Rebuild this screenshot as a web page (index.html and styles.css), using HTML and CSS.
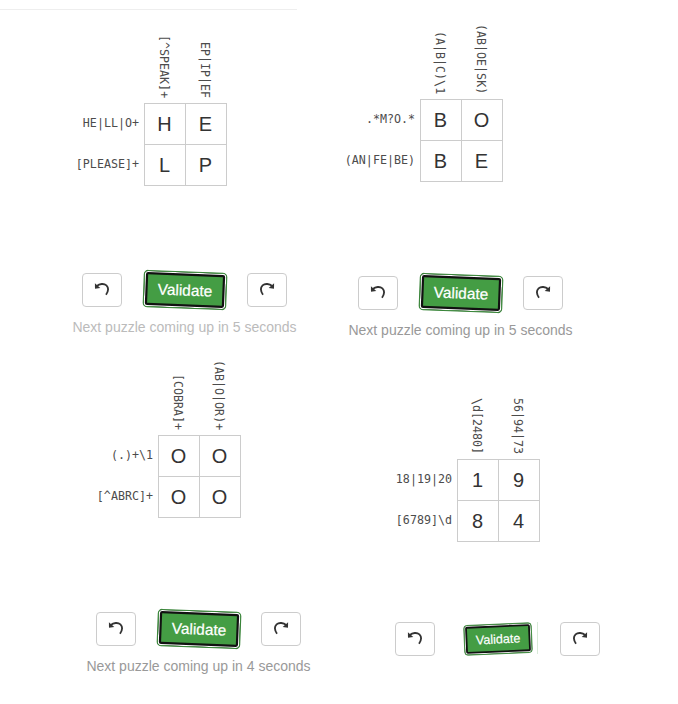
FILE: index.html
```html
<!DOCTYPE html>
<html lang="en">
<head>
<meta charset="utf-8">
<title>Regex Crossword</title>
<link rel="stylesheet" href="styles.css">
</head>
<body>
<svg width="0" height="0" class="defs"><defs>
<symbol id="undo" viewBox="0 0 16 16"><path d="M2.8 4C5.5 1.7 10 1.2 12.4 3.4C14.8 5.9 14.2 9.6 12 12.7" fill="none" stroke="currentColor" stroke-width="1.8"/><path d="M.9 1.3L1 6.8L6.3 6Z" fill="currentColor"/></symbol>
</defs></svg>
<hr class="rule">
<main class="page">
  <section class="puzzle puzzle-help">
    <div class="board">
      <div class="col-clues"><span>[^SPEAK]+</span><span>EP|IP|EF</span></div>
      <div class="row-clues"><span>HE|LL|O+</span><span>[PLEASE]+</span></div>
      <div class="cells"><div><b>H</b></div><div><b>E</b></div><div><b>L</b></div><div><b>P</b></div></div>
    </div>
    <div class="controls"><button class="icon-btn"><svg><use href="#undo"/></svg></button><button class="validate">Validate</button><button class="icon-btn redo"><svg><use href="#undo"/></svg></button></div>
    <p class="message faded">Next puzzle coming up in 5 seconds</p>
  </section>
  <section class="puzzle puzzle-bobe">
    <div class="board">
      <div class="col-clues"><span>(A|B|C)\1</span><span>(AB|OE|SK)</span></div>
      <div class="row-clues"><span>.*M?O.*</span><span>(AN|FE|BE)</span></div>
      <div class="cells"><div><b>B</b></div><div><b>O</b></div><div><b>B</b></div><div><b>E</b></div></div>
    </div>
    <div class="controls"><button class="icon-btn"><svg><use href="#undo"/></svg></button><button class="validate">Validate</button><button class="icon-btn redo"><svg><use href="#undo"/></svg></button></div>
    <p class="message">Next puzzle coming up in 5 seconds</p>
  </section>
  <section class="puzzle puzzle-oooo">
    <div class="board">
      <div class="col-clues"><span>[COBRA]+</span><span>(AB|O|OR)+</span></div>
      <div class="row-clues"><span>(.)+\1</span><span>[^ABRC]+</span></div>
      <div class="cells"><div><b>O</b></div><div><b>O</b></div><div><b>O</b></div><div><b>O</b></div></div>
    </div>
    <div class="controls"><button class="icon-btn"><svg><use href="#undo"/></svg></button><button class="validate">Validate</button><button class="icon-btn redo"><svg><use href="#undo"/></svg></button></div>
    <p class="message">Next puzzle coming up in 4 seconds</p>
  </section>
  <section class="puzzle puzzle-1984">
    <div class="board">
      <div class="col-clues"><span>\d[2480]</span><span>56|94|73</span></div>
      <div class="row-clues"><span>18|19|20</span><span>[6789]\d</span></div>
      <div class="cells"><div><b>1</b></div><div><b>9</b></div><div><b>8</b></div><div><b>4</b></div></div>
    </div>
    <div class="controls"><button class="icon-btn"><svg><use href="#undo"/></svg></button><div class="edge"><button class="validate small">Validate</button></div><button class="icon-btn redo"><svg><use href="#undo"/></svg></button></div>
  </section>
</main>
</body>
</html>
```
FILE: styles.css
```css
* { box-sizing: border-box; }
body { margin: 0; background: #fff; color: #333; font-family: "Liberation Sans", Arial, sans-serif; font-size: 14px; overflow: hidden; }
.defs { display: block; }
.rule { width: 297px; height: 1px; margin: 9px 0 -10px; border: 0; background: #eee; }
.page { display: grid; grid-template-columns: 339px 339px; grid-template-rows: 350px 354px; }
.puzzle { width: 241px; }
.puzzle-help { margin-left: 64px; padding-top: 23px; --gap: 87px; }
.puzzle-bobe { margin-left: 1px; padding-top: 19px; --gap: 94px; }
.puzzle-oooo { margin-left: 78px; padding-top: 5px; --gap: 94px; }
.puzzle-1984 { margin-left: 38px; padding-top: 29px; --gap: 80px; }
.board { display: grid; grid-template-columns: 80px 83px; grid-template-rows: 80px 83px; }
.col-clues, .row-clues { font: 11.67px/41px "DejaVu Sans Mono", monospace; color: #4c4c4c; white-space: nowrap; }
.col-clues { grid-column: 2; display: flex; padding-bottom: 5px; }
.col-clues span { width: 41px; writing-mode: vertical-rl; text-align: right; line-height: 41px; transform: translateX(-.5px) scaleX(1.07); }
.row-clues { display: flex; flex-direction: column; text-align: right; padding-right: 5px; }
.cells { display: grid; grid-template-columns: 40px 40px; grid-template-rows: 40px 40px; gap: 1px; padding: 1px; background: #ccc; }
.cells div { background: #fff; text-align: center; }
.cells b { display: block; font-size: 21px; font-weight: 400; line-height: 40px; transform: translateX(-.5px) scaleX(.95); }
.controls { display: flex; justify-content: space-between; width: 205px; margin: var(--gap) 0 0 18px; }
.icon-btn { width: 40px; height: 34px; padding: 0; border: 1px solid #ccc; border-radius: 4px; background: #fff; color: #333; display: flex; align-items: center; justify-content: center; }
.icon-btn svg { width: 16px; height: 16px; }
.redo svg { transform: scaleX(-1); }
.validate { width: 76px; height: 34px; padding: 0; border: 1px solid #398439; border-radius: 4px; background: #449d44; color: #fff; font: 14px "Liberation Sans", Arial, sans-serif; -webkit-text-stroke: .2px #fff; box-shadow: inset 0 0 0 1px #fff, inset 0 0 0 3px #111; transform: rotate(2.2deg) scale(1.1); }
.validate.small { transform: rotate(-2.5deg) scale(.9); }
.edge { width: 78px; height: 32px; margin-right: -2px; border-right: 1px solid #d9ead9; }
.message { margin: 10px -20px 0; font-size: 14px; line-height: 20px; color: #999; text-align: center; }
.message.faded { color: #bbb; }
```
